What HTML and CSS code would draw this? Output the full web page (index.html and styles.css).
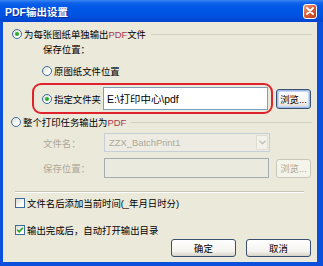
FILE: index.html
```html
<!DOCTYPE html>
<html>
<head>
  <title>PDF输出设置</title>
  <meta charset="UTF-8">
  <link rel="stylesheet" href="styles.css">
</head>
<body>
  <div class="window">
    <div class="titlebar">
      <span class="title">PDF输出设置</span>
      <span class="close-btn">
        <svg width="8" height="8" viewBox="0 0 8 8"><path d="M1 1L7 7M7 1L1 7" stroke="#fff" stroke-width="1.8" stroke-linecap="round"/></svg>
      </span>
    </div>
    <div class="client">
      <div class="group-head first">
        <span class="radio checked"></span>
        <span>为每张图纸单独输出<em>PDF</em>文件</span>
        <span class="rule"></span>
      </div>
      <div class="field-caption">保存位置：</div>
      <div class="sub-option">
        <span class="radio"></span>
        <span>原图纸文件位置</span>
      </div>
      <div class="target-row">
        <div class="highlight">
          <span class="radio checked"></span>
          <span>指定文件夹</span>
          <div class="textbox">E:\打印中心\pdf</div>
        </div>
        <button class="btn small focus">浏览...</button>
      </div>
      <div class="group-head second">
        <span class="radio"></span>
        <span>整个打印任务输出为<em>PDF</em></span>
        <span class="rule"></span>
      </div>
      <div class="field-row name-row">
        <span class="field-label">文件名：</span>
        <div class="combo">
          <span class="combo-text">ZZX_BatchPrint1</span>
          <span class="combo-arrow">
            <svg width="7" height="5" viewBox="0 0 7 5"><path d="M0.5 0.8L3.5 3.8L6.5 0.8" fill="none" stroke="#C4C2B6" stroke-width="1.4"/></svg>
          </span>
        </div>
      </div>
      <div class="field-row path-row">
        <span class="field-label">保存位置：</span>
        <div class="textbox disabled"></div>
        <button class="btn small disabled">浏览...</button>
      </div>
      <div class="separator"></div>
      <div class="check-row first">
        <span class="checkbox"></span>
        <span>文件名后添加当前时间(_年月日时分)</span>
      </div>
      <div class="check-row second">
        <span class="checkbox checked">
          <svg width="8" height="8" viewBox="0 0 8 8"><path d="M1.2 3.8L3.2 5.8L6.8 1.8" fill="none" stroke="#21A121" stroke-width="1.6"/></svg>
        </span>
        <span>输出完成后，自动打开输出目录</span>
      </div>
      <div class="actions">
        <button class="btn">确定</button>
        <button class="btn">取消</button>
      </div>
    </div>
  </div>
</body>
</html>
```

FILE: styles.css
```css
:root {
  --frame: #0B4FDD;
  --dialog: #EBE9DA;
  --rule: #D0D0BF;
  --disabled-text: #ACA899;
  --input-border: #7F9DB9;
  --radio-border: #3D6C9E;
}
body {
  margin: 0;
  font-family: "Liberation Sans", "Noto Sans CJK SC", sans-serif;
  font-size: 9.4px;
  color: #000;
}
em {
  font-style: normal;
  color: #A8364E;
}
.window {
  width: 323px;
  height: 266px;
  background: var(--frame);
  display: flex;
  flex-direction: column;
}
.titlebar {
  height: 22px;
  flex: none;
  display: flex;
  align-items: center;
  justify-content: space-between;
  padding: 0 6px 0 5px;
  background: linear-gradient(#3A86F2 0, #0E61EA 3px, #0056E5 8px, #0053E2 15px, #0044CF 22px);
}
.title {
  color: #fff;
  font-weight: bold;
  font-size: 10.5px;
  text-shadow: 1px 1px #0A2A9A;
}
.close-btn {
  width: 14px;
  height: 15px;
  box-sizing: border-box;
  border: 1px solid #fff;
  border-radius: 3px;
  background: linear-gradient(135deg, #F1A182, #DA5A34 50%, #C23C1A);
  display: flex;
  align-items: center;
  justify-content: center;
}
.client {
  flex: 1;
  margin: 0 6px 4px 3px;
  background: var(--dialog);
  display: flex;
  flex-direction: column;
}
.radio {
  width: 10px;
  height: 10px;
  flex: none;
  box-sizing: border-box;
  border: 1px solid var(--radio-border);
  border-radius: 50%;
  background: linear-gradient(135deg, #DCDBD2, #FFFFFF 70%);
  margin-right: 2px;
  display: flex;
  align-items: center;
  justify-content: center;
}
.radio.checked::after {
  content: "";
  width: 4px;
  height: 4px;
  border-radius: 50%;
  background: #2CAA2C;
}
.group-head {
  display: flex;
  align-items: center;
  height: 16px;
  padding: 0 5px 0 9px;
}
.group-head.first {
  margin-top: 4px;
}
.group-head.second {
  padding-left: 8px;
}
.group-head .rule {
  flex: 1;
  height: 1px;
  background: var(--rule);
  margin-left: 5px;
}
.field-caption {
  height: 16px;
  line-height: 16px;
  padding-left: 40px;
}
.sub-option {
  display: flex;
  align-items: center;
  height: 16px;
  margin-top: 5px;
  padding-left: 39px;
}
.target-row {
  display: flex;
  align-items: center;
  margin-top: 4px;
  padding-left: 29px;
}
.highlight {
  width: 241px;
  height: 31px;
  box-sizing: border-box;
  border: 2px solid #E0222C;
  border-radius: 9px;
  display: flex;
  align-items: center;
  padding: 0 3px 0 8px;
}
.textbox {
  width: 165px;
  height: 23px;
  box-sizing: border-box;
  border: 1px solid var(--input-border);
  background: #fff;
  margin-left: auto;
  padding-left: 3px;
  font-size: 10.4px;
  display: flex;
  align-items: center;
}
.textbox.disabled {
  height: 20px;
  margin-left: 0;
  border-color: #A5ACB2;
  background: #EBEADF;
}
.btn {
  width: 65px;
  height: 18px;
  padding: 0;
  box-sizing: border-box;
  border: 1px solid #3A5270;
  border-radius: 3px;
  background: linear-gradient(#FFFFFF, #F4F3EE 70%, #D8D3C8);
  font: inherit;
  color: #000;
}
.btn.small {
  width: 35px;
  height: 20px;
  margin-left: 3px;
}
.btn.focus {
  box-shadow: inset 0 0 0 1px #9DB8E8, inset 0 0 0 2px #C6D8F5;
}
.btn.disabled {
  height: 19px;
  margin-left: 7px;
  border-color: #C9C7BA;
  background: #F5F4EA;
  color: var(--disabled-text);
}
.field-row {
  display: flex;
  align-items: center;
  padding-left: 40px;
}
.name-row {
  margin-top: 3px;
}
.path-row {
  margin-top: 6px;
}
.field-label {
  width: 61px;
  flex: none;
  color: var(--disabled-text);
}
.combo {
  width: 166px;
  height: 19px;
  box-sizing: border-box;
  border: 1px solid #C6CED8;
  background: #EEECE2;
  display: flex;
  align-items: center;
  justify-content: space-between;
  padding: 0 1px 0 4px;
}
.combo-text {
  color: var(--disabled-text);
}
.combo-arrow {
  width: 12px;
  height: 15px;
  box-sizing: border-box;
  border: 1px solid #E0DED4;
  background: #F3F2EA;
  display: flex;
  align-items: center;
  justify-content: center;
}
.separator {
  width: 289px;
  height: 0;
  margin: 13px 0 0 12px;
  border-top: 1px solid #C8C5B5;
  border-bottom: 1px solid #fff;
}
.check-row {
  display: flex;
  align-items: center;
  height: 14px;
  padding-left: 12px;
}
.check-row.first {
  margin-top: 3px;
}
.check-row.second {
  margin-top: 13px;
}
.checkbox {
  width: 10px;
  height: 10px;
  flex: none;
  box-sizing: border-box;
  border: 1px solid var(--radio-border);
  background: linear-gradient(135deg, #DCDBD2, #FFFFFF 75%);
  margin-right: 2px;
  display: flex;
  align-items: center;
  justify-content: center;
}
.actions {
  display: flex;
  justify-content: flex-end;
  gap: 10px;
  margin-top: 2px;
  padding-right: 6px;
}
```
